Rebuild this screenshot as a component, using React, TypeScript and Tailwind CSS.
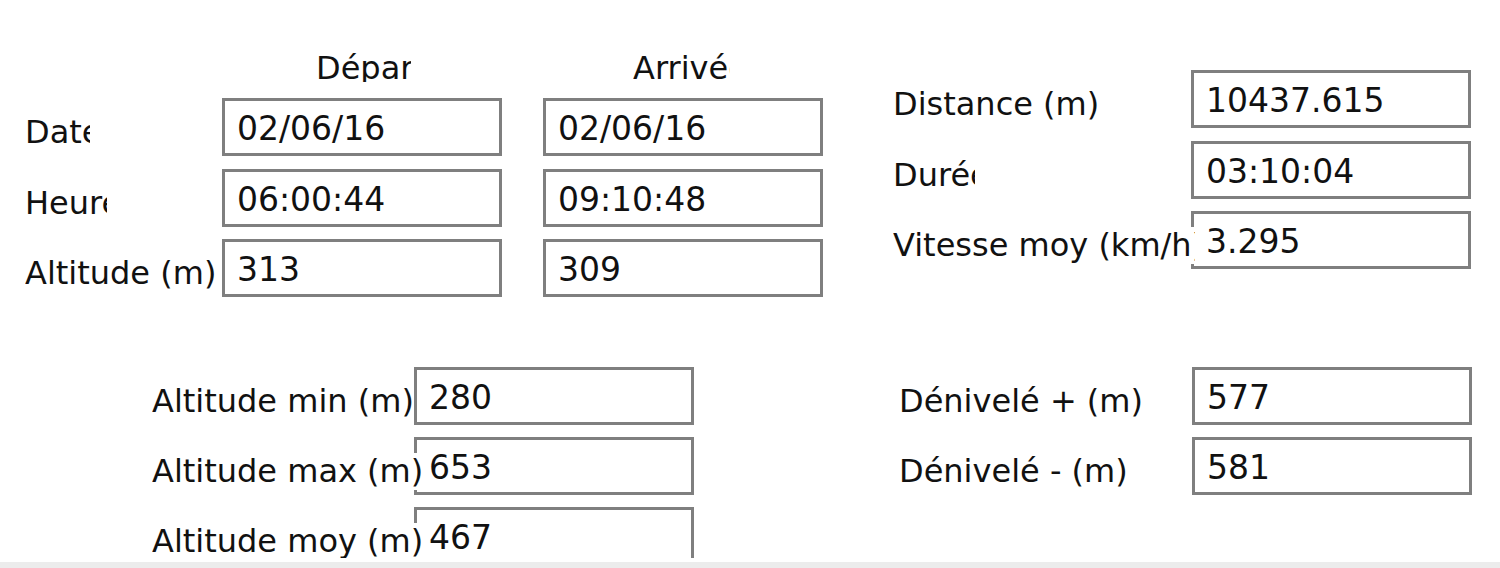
import React from "react";

const FONT = "font-['DejaVu_Sans',sans-serif]";

function Box({ value }: { value: string }) {
  return (
    <div className="h-[58px] w-[280px] shrink-0 border-[3px] border-[#7f7f7f] bg-white pl-[12px] pt-[9px] text-[33px] leading-[37px] text-[#111] whitespace-nowrap overflow-hidden">
      {value}
    </div>
  );
}

function Label({ text, clip }: { text: string; clip?: string }) {
  return (
    <span
      className={`relative z-10 block bg-white text-[32px] leading-[37px] text-[#111] whitespace-nowrap overflow-hidden ${clip ?? "w-max"}`}
    >
      {text}
    </span>
  );
}

export default function App() {
  return (
    <div className={`${FONT} flex h-[568px] w-[1500px] flex-col bg-white`}>
      <div className="h-[558px] overflow-hidden">
        {/* Top section */}
        <div className="flex items-start">
          {/* Départ / Arrivée */}
          <div className="flex flex-col pl-[25px] pt-[50px]">
            <div className="flex h-[48px]">
              <div className="w-[197px] shrink-0" />
              <div className="w-[280px] shrink-0 pl-[94px]">
                <span className="block h-[32px] w-[95px] overflow-hidden whitespace-nowrap text-[32px] leading-[37px] text-[#111]">
                  Départ
                </span>
              </div>
              <div className="w-[41px] shrink-0" />
              <div className="w-[280px] shrink-0 pl-[90px]">
                <span className="block h-[34px] w-[97px] overflow-hidden whitespace-nowrap text-[32px] leading-[37px] text-[#111]">
                  Arrivée
                </span>
              </div>
            </div>
            <div className="flex h-[58px]">
              <div className="w-[197px] shrink-0 pt-[16px]">
                <Label text="Date" clip="w-[65px]" />
              </div>
              <Box value="02/06/16" />
              <div className="w-[41px] shrink-0" />
              <Box value="02/06/16" />
            </div>
            <div className="mt-[13px] flex h-[58px]">
              <div className="w-[197px] shrink-0 pt-[16px]">
                <Label text="Heure" clip="w-[82px]" />
              </div>
              <Box value="06:00:44" />
              <div className="w-[41px] shrink-0" />
              <Box value="09:10:48" />
            </div>
            <div className="mt-[12px] flex h-[58px]">
              <div className="w-[197px] shrink-0 pt-[16px]">
                <Label text="Altitude (m)" />
              </div>
              <Box value="313" />
              <div className="w-[41px] shrink-0" />
              <Box value="309" />
            </div>
          </div>

          {/* Distance / Durée / Vitesse */}
          <div className="ml-[70px] flex flex-col pt-[70px]">
            <div className="flex h-[58px]">
              <div className="w-[298px] shrink-0 pt-[16px]">
                <Label text="Distance (m)" />
              </div>
              <Box value="10437.615" />
            </div>
            <div className="mt-[13px] flex h-[58px]">
              <div className="w-[298px] shrink-0 pt-[16px]">
                <Label text="Durée" clip="w-[82px]" />
              </div>
              <Box value="03:10:04" />
            </div>
            <div className="mt-[12px] flex h-[58px]">
              <div className="w-[298px] shrink-0 pt-[16px]">
                <Label text="Vitesse moy (km/h)" clip="w-[302px]" />
              </div>
              <Box value="3.295" />
            </div>
          </div>
        </div>

        {/* Bottom section */}
        <div className="mt-[70px] flex items-start">
          <div className="flex flex-col pl-[152px]">
            <div className="flex h-[58px]">
              <div className="w-[262px] shrink-0 pt-[16px]">
                <Label text="Altitude min (m)" />
              </div>
              <Box value="280" />
            </div>
            <div className="mt-[12px] flex h-[58px]">
              <div className="w-[262px] shrink-0 pt-[16px]">
                <Label text="Altitude max (m)" />
              </div>
              <Box value="653" />
            </div>
            <div className="mt-[12px] flex h-[58px]">
              <div className="w-[262px] shrink-0 pt-[16px]">
                <Label text="Altitude moy (m)" />
              </div>
              <Box value="467" />
            </div>
          </div>

          <div className="ml-[205px] flex flex-col">
            <div className="flex h-[58px]">
              <div className="w-[293px] shrink-0 pt-[16px]">
                <Label text="Dénivelé + (m)" />
              </div>
              <Box value="577" />
            </div>
            <div className="mt-[12px] flex h-[58px]">
              <div className="w-[293px] shrink-0 pt-[16px]">
                <Label text="Dénivelé - (m)" />
              </div>
              <Box value="581" />
            </div>
          </div>
        </div>
      </div>
      <div className="h-[4px] bg-white" />
      <div className="h-[6px] bg-[#ececec]" />
    </div>
  );
}
